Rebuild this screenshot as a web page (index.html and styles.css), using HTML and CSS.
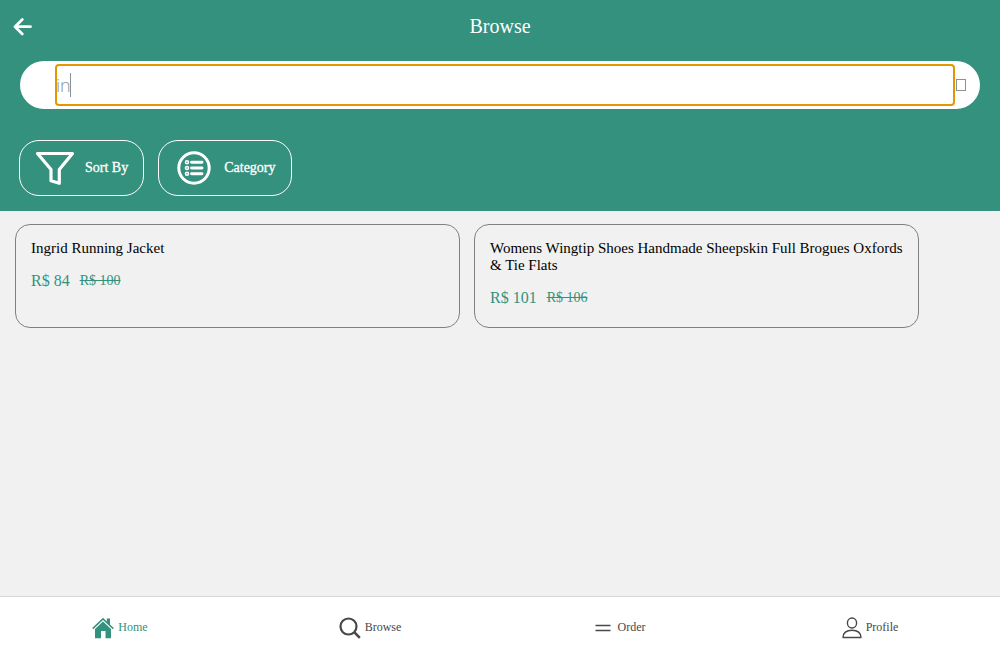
FILE: index.html
```html
<!DOCTYPE html>
<html lang="en">
<head>
<meta charset="utf-8">
<meta name="viewport" content="width=device-width, initial-scale=1">
<title>Browse</title>
<link rel="stylesheet" href="styles.css">
</head>
<body>
<header class="header">
  <div class="titlebar">
    <button class="back" type="button" aria-label="Back">
      <svg width="20" height="18" viewBox="0 0 20 18" fill="none" stroke="currentColor" stroke-width="2.7" stroke-linecap="round" stroke-linejoin="round"><path d="M9.300 1.500 2 8.700l7.300 7.300M2.500 8.700H17.500"/></svg>
    </button>
    <h1 class="title">Browse</h1>
  </div>
  <form class="search">
    <div class="field">
      <input class="search-input" type="text" aria-label="Search products" value="in" autofocus>
      <span class="caret"></span>
    </div>
    <button class="clear" type="button" aria-label="Clear search"><span class="clear-box"></span></button>
  </form>
  <div class="filters">
    <button class="filter" type="button">
      <svg width="40" height="36" viewBox="0 0 40 36" fill="none" stroke="currentColor" stroke-width="3.2" stroke-linejoin="round"><path d="M2.500 3.500h35L24.300 19.500V33.300L16 30.800V19.500Z"/></svg>
      <span>Sort By</span>
    </button>
    <button class="filter filter-category" type="button">
      <svg width="36" height="36" viewBox="0 0 36 36" fill="none" stroke="currentColor"><circle cx="18" cy="18" r="15.200" stroke-width="3"/><g stroke-width="1.600"><circle cx="11" cy="12.300" r="1.500"/><circle cx="11" cy="18" r="1.500"/><circle cx="11" cy="23.700" r="1.500"/></g><path d="M15.500 12.300h10.500M15.500 18h10.500M15.500 23.700h10.500" stroke-width="2.900" stroke-linecap="round"/></svg>
      <span>Category</span>
    </button>
  </div>
</header>
<main class="products">
  <article class="card">
    <h2 class="name">Ingrid Running Jacket</h2>
    <p class="prices"><span>R$ 84</span><s class="old">R$ 100</s></p>
  </article>
  <article class="card">
    <h2 class="name">Womens Wingtip Shoes Handmade Sheepskin Full Brogues Oxfords &amp; Tie Flats</h2>
    <p class="prices"><span>R$ 101</span><s class="old">R$ 106</s></p>
  </article>
</main>
<nav class="tabs">
  <a class="tab tab-active" href="#home">
    <svg width="22" height="22" viewBox="0 0 22 22" fill="currentColor"><path d="M11 .8 14.800 4.400V1.500H18v6l3.800 3.600-1 1.100L11 3 1.200 12.200l-1-1.100Z"/><path d="M11 4.600 19 12v9.200h-5.500V14h-4.500v7.200H3V12Z"/></svg>
    <span>Home</span>
  </a>
  <a class="tab" href="#browse">
    <svg width="22" height="22" viewBox="0 0 22 22" fill="none" stroke="currentColor"><circle cx="9.500" cy="9.500" r="8" stroke-width="2.200"/><path d="m15.200 15.200 5.600 5.600" stroke-width="2.600"/></svg>
    <span>Browse</span>
  </a>
  <a class="tab tab-order" href="#order">
    <svg width="16" height="22" viewBox="0 0 16 22" fill="none" stroke="currentColor" stroke-width="1.500"><path d="M.5 8.500h15M.5 13.500h15"/></svg>
    <span>Order</span>
  </a>
  <a class="tab" href="#profile">
    <svg width="20" height="22" viewBox="0 0 20 22" fill="none" stroke="currentColor" stroke-width="1.400" stroke-linejoin="round"><ellipse cx="10" cy="6" rx="4.600" ry="5"/><path d="M1 20.500c.2-4.800 3.700-7.300 9-7.300s8.800 2.500 9 7.300Z"/></svg>
    <span>Profile</span>
  </a>
</nav>
</body>
</html>
```

FILE: styles.css
```css
* {
  box-sizing: border-box;
}

body {
  margin: 0;
  min-height: 100vh;
  display: flex;
  flex-direction: column;
  background: #f1f1f1;
  color: #000;
  font-family: "Liberation Serif", "Times New Roman", serif;
}

button {
  padding: 0;
  border: 0;
  background: none;
  color: inherit;
  font: inherit;
}

svg {
  display: block;
  flex: none;
}

.header {
  padding-bottom: 15px;
  background: #34917d;
  color: #fff;
}

.titlebar {
  display: grid;
  grid-template-columns: 1fr auto 1fr;
  align-items: center;
  height: 53px;
  padding: 0 13px;
}

.back {
  justify-self: start;
}

.title {
  margin: 0;
  font-size: 20px;
  font-weight: 400;
}

.search {
  display: flex;
  align-items: center;
  height: 48px;
  margin: 8px 20px 31px;
  padding: 0 14px 0 36px;
  border-radius: 24px;
  background: #fff;
  color: #86939e;
}

.field {
  position: relative;
  flex: 1;
  min-width: 0;
}

.search-input {
  display: block;
  width: 100%;
  height: 40px;
  padding: 0;
  border: 0;
  outline: 2px solid #e59700;
  outline-offset: -1px;
  border-radius: 3px;
  background: none;
  color: inherit;
  caret-color: transparent;
  font: 300 18px "Open Sans", sans-serif;
}

.caret {
  position: absolute;
  top: 8px;
  left: 14px;
  width: 1px;
  height: 24px;
  background: #86939e;
}

.clear {
  padding-left: 2px;
}

.clear-box {
  display: block;
  width: 10px;
  height: 12px;
  border: 1px solid #86939e;
}

.filters {
  display: flex;
  gap: 14px;
  padding: 0 19px;
}

.filter {
  display: flex;
  align-items: center;
  gap: 10px;
  height: 56px;
  padding: 0 15px;
  border: 1px solid #fff;
  border-radius: 20px;
  font-size: 14px;
  -webkit-text-stroke: 0.3px currentColor;
}

.filter-category {
  gap: 12px;
  padding: 0 15px 0 17px;
}

.products {
  flex: 1;
  display: grid;
  grid-template-columns: 1fr 1fr;
  align-content: start;
  gap: 14px;
  padding: 13px 81px 13px 15px;
}

.card {
  min-height: 104px;
  padding: 15px;
  border: 1px solid #808080;
  border-radius: 15px;
}

.name {
  margin: 0;
  font-size: 15px;
  font-weight: 400;
  line-height: 17px;
}

.prices {
  display: flex;
  align-items: center;
  gap: 10px;
  margin: 15px 0 0;
  color: #34917d;
  font-size: 16px;
  line-height: 18px;
}

.old {
  font-size: 14px;
}

.tabs {
  display: grid;
  grid-template-columns: repeat(4, 1fr);
  height: 64px;
  padding-bottom: 2px;
  border-top: 1px solid #d8d8d8;
  background: #fff;
}

.tab {
  display: flex;
  align-items: center;
  justify-content: center;
  gap: 4px;
  padding-right: 10px;
  color: #484848;
  font-size: 12px;
  text-decoration: none;
}

.tab-order {
  gap: 7px;
}

.tab-active {
  color: #34917d;
}
```
